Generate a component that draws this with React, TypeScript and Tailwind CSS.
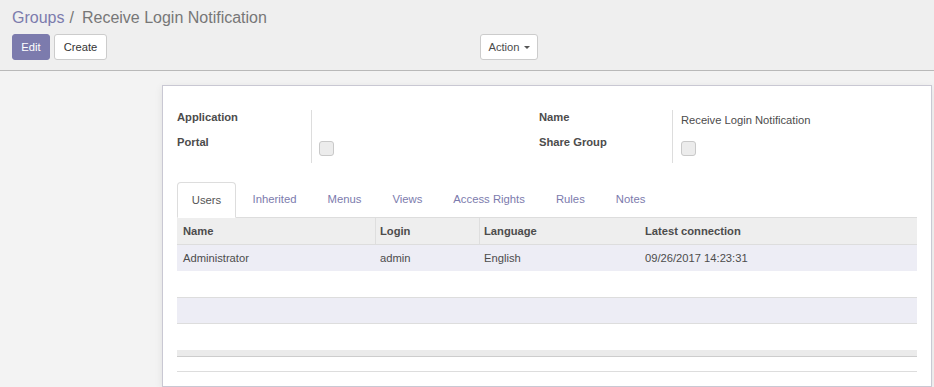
import React from "react";

const font = { fontFamily: '"Liberation Sans", Arial, sans-serif' };

function Checkbox() {
  return <div className="w-[15px] h-[15px] rounded-[3px] border border-[#c9c9c9] bg-[#ececec]" />;
}

export default function App() {
  const tabs = ["Users", "Inherited", "Menus", "Views", "Access Rights", "Rules", "Notes"];
  return (
    <div className="w-[934px] h-[387px] overflow-hidden bg-[#f3f3f3]" style={font}>
      {/* control panel */}
      <div className="h-[71px] bg-[#efefef] border-b border-[#b9b9b9] pl-[12px]">
        <div className="pt-[8px] h-[28px] flex items-center text-[16px] leading-[20px]">
          <span className="text-[#7c7bad]">Groups</span>
          <span className="text-[#777] ml-[5px] mr-[8px]">/</span>
          <span className="text-[#777]">Receive Login Notification</span>
        </div>
        <div className="mt-[6px] flex">
          <div className="flex gap-[4px] w-[468px]">
            <button className="h-[26px] w-[38px] rounded-[3px] bg-[#7c7bad] text-white text-[11.2px] border border-[#7c7bad]">Edit</button>
            <button className="h-[26px] w-[53px] rounded-[3px] bg-white text-[#333] text-[11.2px] border border-[#ccc]">Create</button>
          </div>
          <button className="h-[26px] w-[58px] justify-center rounded-[3px] bg-white text-[#4c4c4c] text-[11.2px] border border-[#ccc] flex items-center">
            Action
            <span className="ml-[4px] w-0 h-0 border-l-[3.5px] border-r-[3.5px] border-t-[3.5px] border-l-transparent border-r-transparent border-t-[#555]" />
          </button>
        </div>
      </div>

      {/* sheet */}
      <div className="mt-[14px] ml-[162px] w-[770px] bg-white border border-[#c9c8d3] shadow-[0_2px_8px_rgba(0,0,0,0.08)] px-[14px] pt-[24px] pb-[14px] text-[11.2px] text-[#4c4c4c]">
        {/* groups */}
        <div className="flex">
          <div className="w-[362px] flex">
            <div className="w-[135px] border-r border-[#ddd] font-bold">
              <div className="h-[24px] leading-[14px]">Application</div>
              <div className="h-[29px] pt-[1px] leading-[14px]">Portal</div>
            </div>
            <div className="pl-[7px]">
              <div className="h-[24px]" />
              <div className="pt-[7px]"><Checkbox /></div>
            </div>
          </div>
          <div className="flex-1 flex">
            <div className="w-[134px] border-r border-[#ddd] font-bold">
              <div className="h-[24px] leading-[14px]">Name</div>
              <div className="h-[29px] pt-[1px] leading-[14px]">Share Group</div>
            </div>
            <div className="pl-[8px]">
              <div className="h-[24px] pt-[3px] leading-[14px]">Receive Login Notification</div>
              <div className="pt-[7px]"><Checkbox /></div>
            </div>
          </div>
        </div>

        {/* tabs */}
        <div className="mt-[19px] flex h-[36px] border-b border-[#ddd]">
          {tabs.map((t, i) =>
            i === 0 ? (
              <div key={t} className="h-[36px] w-[59px] mr-[2px] flex items-center justify-center border border-[#ddd] border-b-transparent rounded-t-[4px] bg-white text-[#555] text-[11.3px]">
                {t}
              </div>
            ) : (
              <div key={t} className="h-[35px] px-[13.5px] mr-[2px] flex items-center border border-transparent text-[#7c7bad] text-[11.3px]">
                {t}
              </div>
            )
          )}
        </div>

        {/* table */}
        <div className="grid grid-cols-[198px_104px_161px_1fr] h-[27px] bg-[#eee] border-b border-[#ddd] font-bold items-stretch">
          <div className="pl-[6px] flex items-center">Name</div>
          <div className="pl-[4px] flex items-center border-l border-[#dedede]">Login</div>
          <div className="pl-[4px] flex items-center border-l border-[#dedede]">Language</div>
          <div className="pl-[5px] flex items-center">Latest connection</div>
        </div>
        <div className="grid grid-cols-[198px_104px_161px_1fr] h-[26px] bg-[#ededf5] items-center">
          <div className="pl-[6px]">Administrator</div>
          <div className="pl-[5px]">admin</div>
          <div className="pl-[5px]">English</div>
          <div className="pl-[5px]">09/26/2017 14:23:31</div>
        </div>
        <div className="h-[26px]" />
        <div className="h-[27px] border-t border-b border-[#ddd] bg-[#ededf5]" />
        <div className="h-[26px]" />
        <div className="h-[7px] bg-[#ebebeb] border-b border-[#cdcdcd]" />
        <div className="h-[14px]" />
        <div className="h-px bg-[#ddd]" />
      </div>
    </div>
  );
}
